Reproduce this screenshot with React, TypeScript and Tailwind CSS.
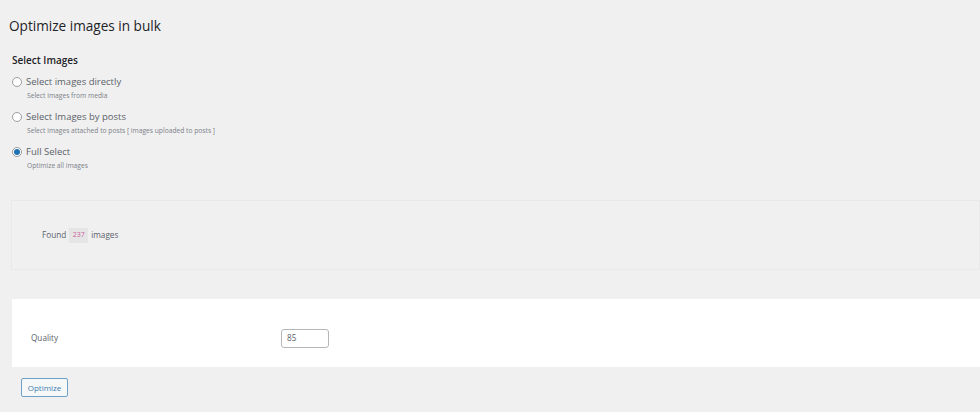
const options = [
  { label: "Select images directly", hint: "Select images from media", checked: false },
  { label: "Select Images by posts", hint: "Select images attached to posts [ images uploaded to posts ]", checked: false },
  { label: "Full Select", hint: "Optimize all images", checked: true },
];

const Radio = ({ checked }: { checked: boolean }) => (
  <span className="flex h-[10px] w-[10px] shrink-0 items-center justify-center rounded-full border border-[#9a9da1] bg-white">
    {checked && <span className="h-[6px] w-[6px] rounded-full bg-[#2271b1]" />}
  </span>
);

export default function App() {
  return (
    <div className="h-[412px] w-[980px] overflow-hidden bg-[#f0f0f1] font-['Open_Sans',sans-serif] text-[#5c6268]">
      <h1 className="pl-[9px] pt-[16px] text-[13.6px] leading-[20px] text-[#1d2327]">
        Optimize images in bulk
      </h1>
      <div className="pl-[12px] pt-[17px]">
        <h2 className="text-[10px] leading-[14px] font-semibold text-[#1d2327]">Select Images</h2>
        <div className="mt-[8px] flex flex-col gap-[10px]">
          {options.map((o) => (
            <div key={o.label}>
              <div className="flex h-[14px] items-center gap-[4px] text-[9.5px]">
                <Radio checked={o.checked} />
                <span>{o.label}</span>
              </div>
              <p className="mt-[2px] pl-[15px] text-[6.7px] leading-[9px] text-[#7c8187]">{o.hint}</p>
            </div>
          ))}
        </div>
      </div>
      <div className="ml-[11px] mt-[30px] flex h-[70px] items-center border border-[#e9e9ea] pl-[30px] pt-[1px] text-[8.2px]">
        <span>Found</span>
        <code className="mx-[3px] bg-[#e5e5e5] px-[3.5px] py-[2px] font-['Open_Sans',sans-serif] text-[7px] text-[#c9609a]">237</code>
        <span>images</span>
      </div>
      <div className="ml-[12px] mt-[29px] flex h-[68px] items-center bg-white pl-[19px] pt-[11px] text-[8.2px]">
        <span className="w-[250px]">Quality</span>
        <div className="-mt-[1px] flex h-[19px] w-[48px] items-center rounded-[3px] border border-[#b4b6b9] pl-[5px]">85</div>
      </div>
      <button className="ml-[21px] mt-[11px] flex h-[19px] w-[47px] items-center justify-center rounded-[2px] border border-[#6fa0c8] bg-[#f6f7f7] text-[8px] text-[#3f7fb5]">
        Optimize
      </button>
    </div>
  );
}
